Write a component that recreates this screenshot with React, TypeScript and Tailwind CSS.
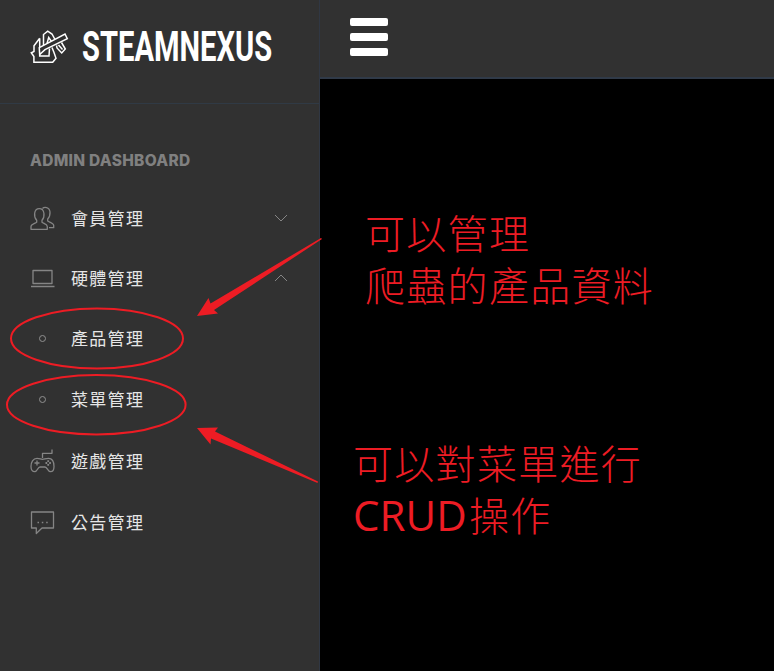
import type { ReactNode } from 'react';

const cjk = "font-['Noto_Sans_CJK_TC','Noto_Sans',sans-serif]";

function Icon({ children }: { children: ReactNode }) {
  return (
    <svg width="26" height="28" viewBox="0 0 26 28" fill="none" stroke="#858585" strokeWidth="1.3" strokeLinejoin="round" className="shrink-0">
      {children}
    </svg>
  );
}

const UsersIcon = () => (
  <Icon>
    <path d="M1 25.300V22.500C1 20.300 5 19.500 6.700 18.200V16.300C3.500 13 3.600 4.700 9.300 4.700S15 13 12 16.300V18.200C13.500 19.500 17.300 20.300 17.300 22.500V25.300Z" />
    <path d="M12.500 4.500C14 2.700 19.500 2.500 20 8C20.200 11.500 19 13.700 17.700 15V17C19.500 18.200 23.700 19.300 23.700 21.300V23.700H19" />
  </Icon>
);

const LaptopIcon = () => (
  <Icon>
    <path d="M3 6.500H22V19.500H3ZM1 22.500H24.500" />
  </Icon>
);

const GameIcon = () => (
  <Icon>
    <path d="M12.500 11V6.300H22V2.500M7 11.300C10 11.300 10.500 12.300 12.500 12.300S15.500 11.300 18.500 11.300C22.500 11.300 24 15.500 24 19.500C24 23 22.500 24.700 20.500 24.700C17.500 24.700 17.500 20 15 20H10C7.500 20 7.500 24.700 4.800 24.700C2.500 24.700 1 23 1 19.500C1 15.500 3 11.300 7 11.300Z" />
    <path d="M7 13.500V18.500M4.500 16H9.500" />
    <path d="M18.200 13.300V15M18.200 17V18.700M15.500 16H17.200M19.200 16H20.900" strokeWidth="1.800" />
  </Icon>
);

const ChatIcon = () => (
  <Icon>
    <path d="M1.500 4H23.500V20H12L6.300 25.500V20H1.500Z" />
    <path d="M7.500 14.500H9M11.800 14.500H13.300M16.200 14.500H17.700" strokeWidth="1.500" />
  </Icon>
);

const Dot = () => (
  <span className="flex w-[26px] justify-center">
    <span className="mr-0.5 size-[7px] rounded-full border border-[#909090]" />
  </span>
);

function Chevron({ up = false }: { up?: boolean }) {
  return (
    <svg width="14" height="8" viewBox="0 0 14 8" fill="none" stroke="#858585" strokeWidth="1" className="ml-auto">
      <path d={up ? 'M1 7L7 1L13 7' : 'M1 1L7 7L13 1'} />
    </svg>
  );
}

function Item({ icon, label, end, height = 'h-[61px]' }: { icon: ReactNode; label: string; end?: ReactNode; height?: string }) {
  return (
    <li className={`flex items-center pr-[31px] pl-[30px] ${height}`}>
      {icon}
      <span className={`ml-[15px] text-[17px] leading-6 font-normal tracking-[1.3px] whitespace-nowrap text-[#e6e6e6] ${cjk}`}>{label}</span>
      {end}
    </li>
  );
}

export default function App() {
  return (
    <div className="relative flex h-[671px] w-[774px] overflow-hidden bg-black">
      <aside className="flex h-full w-[320px] shrink-0 flex-col border-r border-[#303743] bg-[#313131]">
        <div className="flex h-[104px] shrink-0 items-start border-b border-[#303a45] pt-[22px] pl-[30px]">
          <svg width="40" height="36" viewBox="0 0 40 36" fill="none" stroke="white" strokeWidth="1.500" strokeLinejoin="miter" className="mt-2 shrink-0">
            <path d="M13.500 15V4.500L17.700 1.200L22 4L25 9.500M17 13.500L18.700 7.500L21.500 11.500" />
            <path d="M9.700 8.300L4 15.700V21.500L1.300 22.700L3.900 26.500V32.300H22.700L26 28.300L24 22.500L22 17.500M9.700 8.300V26H19L19.500 18.500" />
            <path d="M26.500 15.500L27 18L31.700 23L35.300 19L31.500 12.500M28.500 15L32.500 19.500" />
            <path d="M9.300 17.700L35 4L37.300 8.700L15 19.700L9.700 24.500Z" fill="#313131" />
          </svg>
          <span className="ml-3 origin-left scale-x-[0.678] font-['Roboto'] text-[43px] leading-[49px] font-bold text-white">STEAMNEXUS</span>
        </div>
        <h2 className="mt-[47px] pl-[30px] font-['Inter'] text-[15.500px] leading-5 font-extrabold tracking-[0.270px] whitespace-nowrap text-[#808080]">ADMIN DASHBOARD</h2>
        <ul className="mt-[17px]">
          <Item icon={<UsersIcon />} label="會員管理" end={<Chevron />} height="h-[60px]" />
          <Item icon={<LaptopIcon />} label="硬體管理" end={<Chevron up />} height="h-[60px]" />
          <Item icon={<Dot />} label="產品管理" height="h-[60px]" />
          <Item icon={<Dot />} label="菜單管理" height="h-[62px]" />
          <Item icon={<GameIcon />} label="遊戲管理" />
          <Item icon={<ChatIcon />} label="公告管理" />
        </ul>
      </aside>
      <div className="flex grow flex-col">
        <header className="flex h-[79px] shrink-0 flex-col gap-[7px] border-b-2 border-[#303a48] bg-[#313131] pt-[18px] pl-[30px]">
          <span className="h-2 w-[38px] rounded-xs bg-white" />
          <span className="h-2 w-[38px] rounded-xs bg-white" />
          <span className="h-2 w-[38px] rounded-xs bg-white" />
        </header>
        <main className="font-['Liberation_Sans','Noto_Sans_CJK_TC',sans-serif] text-[40px] leading-[52px] font-light tracking-[1.300px] whitespace-nowrap text-[#ed1c24]">
          <p className="mt-[130px] pl-[45px]">可以管理<br />爬蟲的產品資料</p>
          <p className="mt-[126px] pl-[33px]">可以對菜單進行<br /><span className="font-['Open_Sans'] text-[42px] leading-none font-normal tracking-[0.100px]">CRUD</span><span className="ml-0.5">操作</span></p>
        </main>
      </div>
      <svg width="774" height="671" viewBox="0 0 774 671" className="pointer-events-none absolute inset-0" fill="none" stroke="#ed1c24" strokeWidth="2">
        <ellipse cx="97" cy="338.500" rx="86" ry="30" />
        <ellipse cx="96.300" cy="404.700" rx="89.300" ry="29.700" />
        <path d="M197 316L208.500 298L210.500 303.500L321 238L322 239L214 310L218 313.500Z" fill="#ed1c24" stroke="none" />
        <path d="M197 428L218 427.500L215 431.500L318 481.500L317.500 483L211 438.500L210.500 444.500Z" fill="#ed1c24" stroke="none" />
      </svg>
    </div>
  );
}
